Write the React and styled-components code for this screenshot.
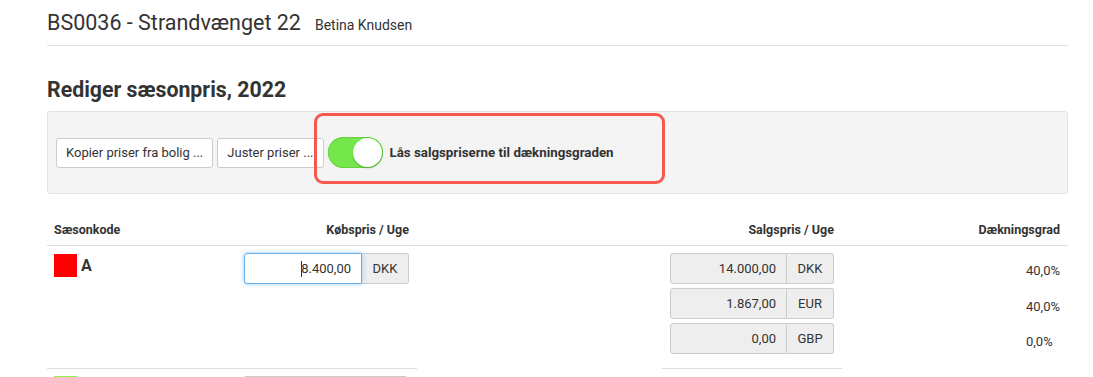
import React from "react";
import styled, { createGlobalStyle } from "styled-components";

const GlobalStyle = createGlobalStyle`
  body {
    margin: 0;
    background: #fff;
    font-family: Roboto, "Liberation Sans", Arial, sans-serif;
    color: #333;
  }
`;

const Page = styled.div`
  padding: 0 25px 0 47px;
  height: 377px;
  overflow: hidden;
`;

const TopBar = styled.div`
  display: flex;
  align-items: baseline;
  gap: 14px;
  height: 46px;
  padding-top: 10px;
  box-sizing: border-box;
  border-bottom: 1px solid #e2e2e2;
`;

const House = styled.h1`
  margin: 0;
  font-size: 21.5px;
  font-weight: 400;
`;

const Owner = styled.span`
  font-size: 14px;
`;

const Heading = styled.h2`
  margin: 31px 0 0;
  font-size: 21.3px;
  font-weight: 700;
  line-height: 26px;
`;

const Toolbar = styled.div`
  position: relative;
  margin-top: 8px;
  height: 83px;
  box-sizing: border-box;
  background: #f4f4f4;
  border: 1px solid #e3e3e3;
  border-radius: 3px;
  display: flex;
  align-items: center;
  gap: 4px;
  padding: 0 8px;
`;

const Button = styled.button`
  height: 30px;
  padding: 0 9px;
  background: #fff;
  border: 1px solid #ccc;
  border-radius: 3px;
  font-family: inherit;
  font-size: 13px;
  color: #333;
`;

const Switch = styled.span`
  position: relative;
  width: 55px;
  height: 31px;
  border-radius: 16px;
  background: #74e84a;
  box-shadow: inset 0 0 0 1px #6ad03f;
  &::after {
    content: "";
    position: absolute;
    right: 1px;
    top: 1px;
    width: 29px;
    height: 29px;
    border-radius: 50%;
    background: #fff;
    box-shadow: 0 1px 2px rgba(0, 0, 0, 0.25);
  }
`;

const SwitchLabel = styled.span`
  margin-left: 3px;
  font-size: 13.3px;
  font-weight: 700;
`;

const Highlight = styled.div`
  position: absolute;
  left: 266px;
  top: 1px;
  width: 351px;
  height: 71px;
  box-sizing: border-box;
  border: 3px solid #f4584e;
  border-radius: 9px;
  pointer-events: none;
`;

const Table = styled.div`
  margin-top: 19px;
  display: grid;
  grid-template-columns: 190px 180px 245px 180px 226px;
  width: 1021px;
`;

const Head = styled.div`
  height: 32px;
  display: flex;
  align-items: center;
  justify-content: ${(p) => (p.$right ? "flex-end" : "flex-start")};
  padding: 0 ${(p) => (p.$right ? "8px" : "0")} 0 ${(p) => (p.$right ? "0" : "7px")};
  border-bottom: 1px solid #ddd;
  font-size: 12.5px;
  font-weight: 700;
`;

const Cell = styled.div`
  height: 123px;
  padding-top: 7px;
  box-sizing: border-box;
  display: flex;
  flex-direction: column;
  align-items: ${(p) => (p.$right ? "flex-end" : "flex-start")};
  gap: 4px;
  padding-left: ${(p) => (p.$right ? "0" : "7px")};
  padding-right: ${(p) => (p.$right ? "8px" : "0")};
  border-bottom: 1px solid ${(p) => (p.$line ? "#ddd" : "transparent")};
`;

const Season = styled.div`
  display: flex;
  align-items: center;
  gap: 4px;
  margin-top: 1px;
  font-size: 16px;
  font-weight: 700;
`;

const Swatch = styled.span`
  width: 23px;
  height: 23px;
  background: ${(p) => p.$color};
`;

const Group = styled.div`
  display: flex;
  height: 31px;
`;

const Field = styled.div`
  width: ${(p) => p.$w}px;
  box-sizing: border-box;
  display: flex;
  align-items: center;
  justify-content: flex-end;
  padding-right: 10px;
  font-size: 13px;
  border: 1px solid ${(p) => (p.$focus ? "#66afe9" : "#ccc")};
  border-radius: 3px 0 0 3px;
  background: ${(p) => (p.$focus ? "#fff" : "#eee")};
  box-shadow: ${(p) =>
    p.$focus ? "0 0 5px rgba(102,175,233,0.6)" : "none"};
  position: relative;
  z-index: 1;
`;

const Caret = styled.span`
  width: 1px;
  height: 16px;
  background: #333;
  margin-right: -1px;
`;

const Addon = styled.div`
  width: 47px;
  box-sizing: border-box;
  display: flex;
  align-items: center;
  justify-content: center;
  font-size: 13px;
  background: #eee;
  border: 1px solid #ccc;
  border-left: none;
  border-radius: 0 3px 3px 0;
`;

const Percent = styled.div`
  height: 35.5px;
  display: flex;
  align-items: center;
  font-size: 13px;
`;

const PercentList = styled.div`
  display: flex;
  flex-direction: column;
`;

const PeekRow = styled.div`
  display: grid;
  grid-template-columns: 190px 180px;
`;

const PeekSwatch = styled.span`
  margin: 7px 0 0 7px;
  width: 23px;
  height: 23px;
  background: #8ef24a;
`;

const PeekInput = styled.span`
  margin: 7px 0 0 6px;
  width: 163px;
  height: 31px;
  border: 1px solid #ccc;
  border-radius: 3px;
`;

const sales = [
  { value: "14.000,00", cur: "DKK", pct: "40,0%" },
  { value: "1.867,00", cur: "EUR", pct: "40,0%" },
  { value: "0,00", cur: "GBP", pct: "0,0%" },
];

export default function App() {
  return (
    <>
      <GlobalStyle />
      <Page>
        <TopBar>
          <House>BS0036 - Strandvænget 22</House>
          <Owner>Betina Knudsen</Owner>
        </TopBar>

        <Heading>Rediger sæsonpris, 2022</Heading>

        <Toolbar>
          <Button>Kopier priser fra bolig ...</Button>
          <Button>Juster priser ...</Button>
          <Switch />
          <SwitchLabel>Lås salgspriserne til dækningsgraden</SwitchLabel>
          <Highlight />
        </Toolbar>

        <Table>
          <Head>Sæsonkode</Head>
          <Head $right>Købspris / Uge</Head>
          <Head />
          <Head $right>Salgspris / Uge</Head>
          <Head $right>Dækningsgrad</Head>

          <Cell $line>
            <Season>
              <Swatch $color="#ff0000" />A
            </Season>
          </Cell>
          <Cell $line $right>
            <Group>
              <Field $w={118} $focus>
                <Caret />
                8.400,00
              </Field>
              <Addon>DKK</Addon>
            </Group>
          </Cell>
          <Cell />
          <Cell $line $right>
            {sales.map((s) => (
              <Group key={s.cur}>
                <Field $w={117}>{s.value}</Field>
                <Addon>{s.cur}</Addon>
              </Group>
            ))}
          </Cell>
          <Cell $right>
            <PercentList>
              {sales.map((s) => (
                <Percent key={s.cur}>{s.pct}</Percent>
              ))}
            </PercentList>
          </Cell>
        </Table>

        <PeekRow>
          <PeekSwatch />
          <PeekInput />
        </PeekRow>
      </Page>
    </>
  );
}
